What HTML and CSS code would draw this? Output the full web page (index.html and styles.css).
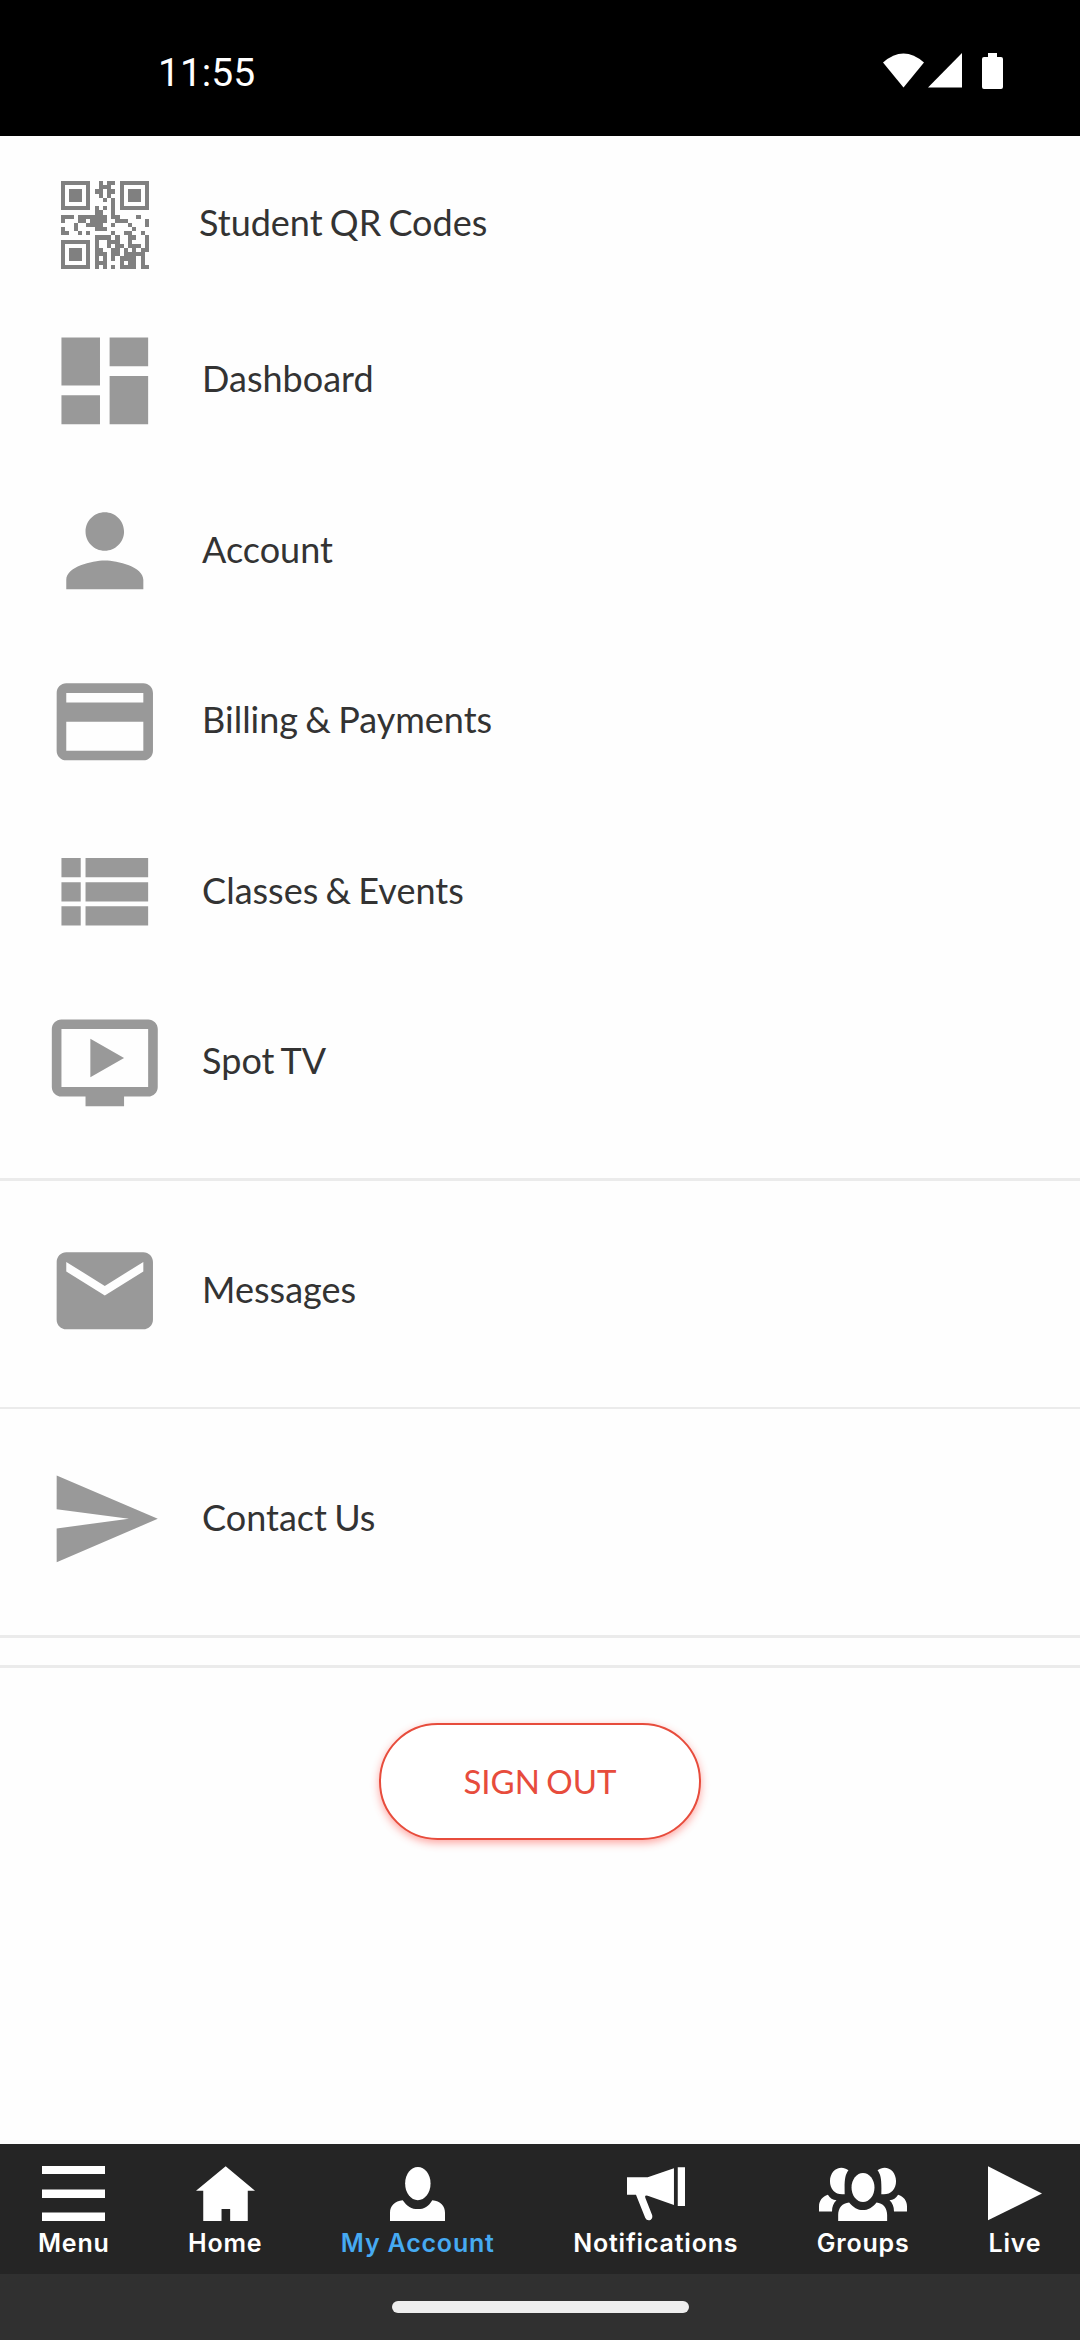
FILE: index.html
```
<!DOCTYPE html>
<html lang="en">
<head>
  <meta charset="UTF-8" />
  <meta name="viewport" content="width=device-width, initial-scale=1" />
  <title>My Account</title>
  <link rel="stylesheet" href="styles.css">
</head>
<body>
  <!-- Status bar -->
  <div class="status-bar">
    <span class="clock">11:55</span>
    <div class="status-icons">
      <svg class="wifi" width="41" height="35" viewBox="0 0 41 35"><path d="M0 9.500Q20.500-8.500 41 9.500L20.500 34.500Z"/></svg>
      <svg class="signal" width="34" height="35" viewBox="0 0 34 35"><path d="M34 0V34.500H0Z"/></svg>
      <svg class="battery" width="21" height="36" viewBox="0 0 21 36"><path d="M6 0h9v4h4q2 0 2 2v28q0 2-2 2H2q-2 0-2-2V6q0-2 2-2h4Z"/></svg>
    </div>
  </div>

  <!-- Main Content -->
  <main class="content">
    <div class="section first">
      <a class="row qr-row">
        <svg class="qr" id="qr" viewBox="0 0 21 21" shape-rendering="crispEdges"></svg>
        <span>Student QR Codes</span>
      </a>
      <a class="row">
        <svg class="icon" viewBox="0 0 24 24"><path d="M3 13h8V3H3v10zm0 8h8v-6H3v6zm10 0h8V11h-8v10zm0-18v6h8V3h-8z"/></svg>
        <span>Dashboard</span>
      </a>
      <a class="row">
        <svg class="icon" viewBox="0 0 24 24"><path d="M12 12c2.210 0 4-1.790 4-4s-1.790-4-4-4-4 1.790-4 4 1.790 4 4 4zm0 2c-2.670 0-8 1.340-8 4v2h16v-2c0-2.660-5.330-4-8-4z"/></svg>
        <span>Account</span>
      </a>
      <a class="row">
        <svg class="icon" viewBox="0 0 24 24"><path d="M20 4H4c-1.110 0-1.990.89-1.990 2L2 18c0 1.110.89 2 2 2h16c1.110 0 2-.89 2-2V6c0-1.110-.89-2-2-2zm0 14H4v-6h16v6zm0-10H4V6h16v2z"/></svg>
        <span>Billing &amp; Payments</span>
      </a>
      <a class="row">
        <svg class="icon" viewBox="0 0 24 24"><path d="M3 14h4v-4H3v4zm0 5h4v-4H3v4zM3 9h4V5H3v4zm5 5h13v-4H8v4zm0 5h13v-4H8v4zM8 5v4h13V5H8z"/></svg>
        <span>Classes &amp; Events</span>
      </a>
      <a class="row">
        <svg class="icon" viewBox="0 0 24 24"><path d="M21 3H3c-1.110 0-2 .89-2 2v12c0 1.100.89 2 2 2h5v2h8v-2h5c1.100 0 1.990-.9 1.990-2L23 5c0-1.110-.9-2-2-2zm0 14H3V5h18v12zm-5-6l-7 4V7z"/></svg>
        <span>Spot TV</span>
      </a>
    </div>

    <div class="section thin">
      <a class="row">
        <svg class="icon" viewBox="0 0 24 24"><path d="M20 4H4c-1.100 0-1.990.9-1.990 2L2 18c0 1.100.9 2 2 2h16c1.100 0 2-.9 2-2V6c0-1.100-.9-2-2-2zm0 4l-8 5-8-5V6l8 5 8-5v2z"/></svg>
        <span>Messages</span>
      </a>
    </div>

    <div class="section">
      <a class="row">
        <svg class="icon" viewBox="0 0 24 24"><path d="M2.010 21L23 12 2.010 3 2 10l15 2-15 2z"/></svg>
        <span>Contact Us</span>
      </a>
    </div>
    <div class="spacer"></div>

    <button class="sign-out">SIGN OUT</button>
  </main>

  <!-- Bottom tabs -->
  <nav class="tabs">
    <a class="tab">
      <svg width="63" height="55" viewBox="0 0 63 55"><path d="M0 0h63v8H0zM0 23.500h63v8.500H0zM0 46.500h63v8.500H0z"/></svg>
      <span>Menu</span>
    </a>
    <a class="tab">
      <svg width="59" height="55" viewBox="0 0 171 166" preserveAspectRatio="none"><path d="M86 1L171 75H150V166H99V130H74V166H21V75H0Z"/></svg>
      <span>Home</span>
    </a>
    <a class="tab active">
      <svg width="55" height="55" viewBox="0 0 160 166" preserveAspectRatio="none"><ellipse cx="81" cy="53" rx="37" ry="50"/><path d="M0 166V141C0 120 14 105 37 103C49 121 63 130 81 130S113 121 123 103C147 105 160 120 160 141V166Z"/></svg>
      <span>My Account</span>
    </a>
    <a class="tab">
      <svg width="58" height="55" viewBox="0 0 168 166" preserveAspectRatio="none"><path d="M0 34H60L136 7V118L60 90Q50 86 53 96L73 149Q75 159 68 163Q57 166 53 157L26 87H0ZM147 4h21v117h-21z"/></svg>
      <span>Notifications</span>
    </a>
    <a class="tab">
      <svg width="88" height="55" viewBox="0 0 257 166" preserveAspectRatio="none">
        <ellipse cx="128.500" cy="65" rx="33.500" ry="44"/>
        <path d="M56 166V148C56 126 68 112 88 110C100 125 113 133 128 133S157 125 168 110C187 112 199 126 199 148V166Z"/>
        <path id="side" d="M86 13C76 28 74 40 75 85C50 89 32 72 32 46C32 10 64-6 86 13ZM0 137V122C0 105 10 92 26 87C32 97 40 103 51 103C42 112 38 122 38 137Z"/>
        <use href="#side" transform="translate(257 0) scale(-1 1)"/>
      </svg>
      <span>Groups</span>
    </a>
    <a class="tab">
      <svg width="54" height="55" viewBox="0 0 157 166" preserveAspectRatio="none"><path d="M0 1L157 83L0 164Z"/></svg>
      <span>Live</span>
    </a>
  </nav>

  <div class="gesture-bar"><div class="handle"></div></div>

  <script>
    // QR icon, one string per row of modules
    const modules = [
      '#######..#.##.#######',
      '#.....#..###..#.....#',
      '#.###.#.##.##.#.###.#',
      '#.###.#..#.#..#.###.#',
      '#.###.#...#.#.#.###.#',
      '#.....#.....#.#.....#',
      '#######.#.#.#.#######',
      '........##..#........',
      '###.#######.##....#..',
      '#...##.####..###....#',
      '...#..####..#...#...#',
      '#..#....###......#...',
      '##..#.#.....#..##..#.',
      '........####.#..##..#',
      '#######.#..###..#...#',
      '#.....#.#..#.##.###.#',
      '#.###.#.##..##.#.#.##',
      '#.###.#.###.##.#####.',
      '#.###.#.#.#.#.####.#.',
      '#.....#.###...#.##.#.',
      '#######.#.#.#.####.##'
    ];

    let d = '';
    modules.forEach((line, y) => {
      [...line].forEach((c, x) => {
        if (c === '#') d += `M${x} ${y}h1v1h-1z`;
      });
    });
    document.getElementById('qr').innerHTML = `<path d="${d}"/>`;
  </script>
</body>
</html>
```
FILE: styles.css
```
* {
  margin: 0;
  padding: 0;
  box-sizing: border-box;
}
body {
  height: 2340px;
  display: flex;
  flex-direction: column;
  background: #fefefe;
  color: #333;
  font-family: Lato, sans-serif;
  overflow: hidden;
}

/* Status bar */
.status-bar {
  height: 136px;
  flex: none;
  display: flex;
  justify-content: space-between;
  align-items: flex-start;
  padding: 53px 77px 0 158px;
  background: #000;
  color: #fff;
}
.clock {
  font-family: Roboto, sans-serif;
  font-size: 39px;
  line-height: 40px;
}
.status-icons {
  display: flex;
  fill: #fff;
}
.signal {
  margin: 0 20px 0 4px;
}

/* Menu rows */
.content {
  flex: 1;
  display: flex;
  flex-direction: column;
}
.section {
  padding: 25px 0 30.500px;
  border-bottom: 3px solid #ebebeb;
}
.section.first {
  padding: 0 0 30px;
}
.section.thin {
  border-bottom-width: 2px;
}
.row {
  height: 170.500px;
  display: flex;
  align-items: center;
  padding-left: 46.500px;
  font-size: 36px;
  line-height: 44px;
  word-spacing: -2px;
}
.row span {
  margin-bottom: 5px;
}
.icon {
  width: 115.600px;
  height: 115.600px;
  margin-right: 40px;
  fill: #999;
}
.qr-row {
  height: 159.500px;
  padding: 18px 0 0 61px;
}
.qr {
  width: 88px;
  height: 88px;
  margin-right: 50px;
  fill: #808080;
}
.spacer {
  height: 30px;
  border-bottom: 3px solid #ebebeb;
}

.sign-out {
  align-self: center;
  width: 322px;
  height: 117px;
  margin-top: 55px;
  padding-bottom: 2px;
  border: 2px solid #e74c3c;
  border-radius: 59px;
  background: #fff;
  box-shadow: 0 3px 8px rgba(255, 60, 50, 0.45);
  color: #e74c3c;
  font-family: Lato, sans-serif;
  font-size: 33px;
  word-spacing: -2px;
}

/* Bottom tabs */
.tabs {
  height: 130px;
  flex: none;
  display: flex;
  justify-content: space-between;
  padding: 22px 38px 0;
  background: #252525;
}
.tab {
  display: flex;
  flex-direction: column;
  align-items: center;
  color: #fff;
  fill: #fff;
  font-family: Inter, sans-serif;
  font-size: 25px;
  font-weight: 600;
  line-height: 30px;
  letter-spacing: 0.800px;
}
.tab span {
  margin-top: 7px;
}
.tab.active {
  color: #46aaf2;
}

.gesture-bar {
  height: 66px;
  flex: none;
  padding-top: 27px;
  background: #303030;
}
.handle {
  width: 297px;
  height: 12px;
  margin: 0 auto;
  border-radius: 6px;
  background: #eee;
}
```
